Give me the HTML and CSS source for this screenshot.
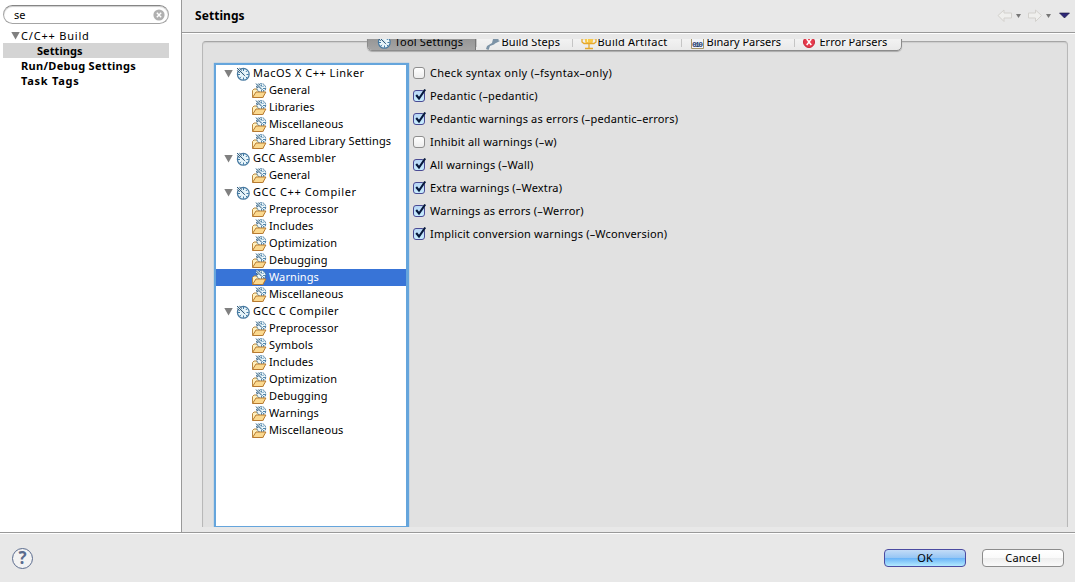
FILE: index.html
```
<!DOCTYPE html>
<html lang="en">
<head>
<meta charset="utf-8">
<title>Settings</title>
<link rel="stylesheet" href="styles.css">
</head>
<body>
<svg class="defs" aria-hidden="true">
  <symbol id="dial" viewBox="0 0 14 14">
    <circle cx="7.300" cy="7.300" r="5.900" fill="#eaf6fb" stroke="#4779a0" stroke-width="1.200"/>
    <path d="M7.500 2v2M7.500 10.500v2.200M2 7.500h2M10.500 7.500h2.200M11.300 3.500 9.800 5M3.500 11.300 5 9.800M11.300 11.300 9.800 9.800" stroke="#3f7ba6" stroke-width="1" fill="none"/>
    <path d="M1 1h2.200l5.500 5.200v2.500H7L1.500 3.300Z" fill="#d4e8ef"/>
    <path d="M1 1l7.800 7.800M3.400 1.200l2.500 2.300M1.300 3.400l2.400 2.500" stroke="#31577a" stroke-width="1"/>
  </symbol>
  <symbol id="folder" viewBox="0 0 16 16">
    <path d="M1.500 14V7.500L3 6h3l1 1.500h5.500V14Z" fill="#fff0bd" stroke="#b98740"/>
    <circle cx="10.300" cy="5" r="4.400" fill="#eff8fb" stroke="#3f749b" stroke-dasharray="2 .7"/>
    <path d="M10.500 1.500v2M14 5.500h-2M13 2.500l-1.500 1.500M13 8l-1.500-1.500M10.500 7v2" stroke="#4d86ad"/>
    <path d="M5 .5h2l4 4v2H9.500L5 2.500Z" fill="#d9edf5"/>
    <path d="m5 .6 6 6M7.500 .8l2 1.800M5.300 3l2 2" stroke="#31577a"/>
    <path d="M1.500 14.500 5 9h9.900L11.800 14.500Z" fill="#fbd98f" stroke="#b87a30"/>
  </symbol>
  <symbol id="check" viewBox="0 0 14 15"><path d="m3.200 7 2.800 3.500L12.200 1.500" fill="none" stroke="#06183b" stroke-width="2.100"/></symbol>
</svg>
<div class="window">
  <div class="top">
    <aside class="sidebar">
      <div class="search"><span>se</span>
        <svg width="12" height="12" viewBox="0 0 12 12"><circle cx="6" cy="6" r="5.600" fill="#b0b0b0"/><path d="m3.800 3.800 4.400 4.400m0-4.400L3.800 8.200" stroke="#fff" stroke-width="1.400"/></svg>
      </div>
      <div class="nav"><i class="arrow"></i><span class="t-build">C/C++ Build</span></div>
      <div class="nav child selected">Settings</div>
      <div class="nav bold">Run/Debug Settings</div>
      <div class="nav bold t-tags">Task Tags</div>
    </aside>
    <main class="main">
      <header class="header"><h1>Settings</h1>
        <svg class="history" width="76" height="16" viewBox="0 0 76 16">
          <path d="M1 7.500 7 2v3h7.500v5H7v3.500Z" fill="#efefed" stroke="#d3d1cd"/>
          <path d="M44.500 7.500 38.500 2v3H31.500v5h7v3.500Z" fill="#efefed" stroke="#d3d1cd"/>
          <path d="M19 6h5L21.500 10ZM49 6h5L51.500 10Z" fill="#777"/>
          <path d="M62.500 5h10L67.500 10Z" fill="#2e2878" stroke="#15133b" stroke-width=".6"/>
        </svg>
      </header>
      <section class="viewport">
        <div class="tabs">
          <div class="tab tab-tool active"><svg width="14" height="14"><use href="#dial"/></svg><span>Tool Settings</span></div>
          <div class="tab tab-steps"><svg width="16" height="15" viewBox="0 0 16 15"><path d="M1 14 2 11l5-3 1-4 3-2h3l1 1-2 2 2 1-3 1.500-2 1-1 1-4 1.500L3.500 15Z" fill="#7c93a6"/></svg><span>Build Steps</span></div>
          <div class="tab tab-artifact"><svg width="16" height="15" viewBox="0 0 16 15"><path d="M4 1h8v5c0 2-1.500 3-4 3S4 8 4 6Z" fill="#f8c94b"/><path d="M4 3.500H1V7l2 1.500h10L15 7V3.500h-3M8 9v4M4 13.500h8" fill="none" stroke="#e5a82c" stroke-width="1.300"/><path d="M6.500 2v5" stroke="#fff1b3"/></svg><span>Build Artifact</span></div>
          <div class="tab tab-binary"><svg width="13" height="14" viewBox="0 0 13 14"><path d="M.5 0v13.500h12V0" fill="#f1f4f8" stroke="#a69569"/><path d="M2 3.500h9" stroke="#8da5c8"/><text x="1" y="12.300" class="bits" textLength="11">010</text></svg><span>Binary Parsers</span></div>
          <div class="tab tab-error"><svg width="12" height="12" viewBox="0 0 12 12"><circle cx="6" cy="6" r="5.500" fill="#e63b4d" stroke="#c82739"/><path d="m3.700 3 4.600 6m0-6L3.700 9" stroke="#fff" stroke-width="1.500"/></svg><span>Error Parsers</span></div>
        </div>
        <div class="group">
          <div class="tree">
            <div class="row parent"><i class="arrow"></i><svg><use href="#dial"/></svg><span>MacOS X C++ Linker</span></div>
            <div class="row"><svg><use href="#folder"/></svg><span>General</span></div>
            <div class="row"><svg><use href="#folder"/></svg><span>Libraries</span></div>
            <div class="row"><svg><use href="#folder"/></svg><span>Miscellaneous</span></div>
            <div class="row"><svg><use href="#folder"/></svg><span>Shared Library Settings</span></div>
            <div class="row parent"><i class="arrow"></i><svg><use href="#dial"/></svg><span class="wide">GCC Assembler</span></div>
            <div class="row"><svg><use href="#folder"/></svg><span>General</span></div>
            <div class="row parent"><i class="arrow"></i><svg><use href="#dial"/></svg><span class="wider">GCC C++ Compiler</span></div>
            <div class="row"><svg><use href="#folder"/></svg><span>Preprocessor</span></div>
            <div class="row"><svg><use href="#folder"/></svg><span>Includes</span></div>
            <div class="row"><svg><use href="#folder"/></svg><span>Optimization</span></div>
            <div class="row"><svg><use href="#folder"/></svg><span>Debugging</span></div>
            <div class="row chosen"><svg><use href="#folder"/></svg><span>Warnings</span></div>
            <div class="row"><svg><use href="#folder"/></svg><span>Miscellaneous</span></div>
            <div class="row parent"><i class="arrow"></i><svg><use href="#dial"/></svg><span class="wide">GCC C Compiler</span></div>
            <div class="row"><svg><use href="#folder"/></svg><span>Preprocessor</span></div>
            <div class="row"><svg><use href="#folder"/></svg><span>Symbols</span></div>
            <div class="row"><svg><use href="#folder"/></svg><span>Includes</span></div>
            <div class="row"><svg><use href="#folder"/></svg><span>Optimization</span></div>
            <div class="row"><svg><use href="#folder"/></svg><span>Debugging</span></div>
            <div class="row"><svg><use href="#folder"/></svg><span>Warnings</span></div>
            <div class="row"><svg><use href="#folder"/></svg><span>Miscellaneous</span></div>
          </div>
          <div class="options">
            <div class="option syntax"><b class="box"></b><span>Check syntax only (–fsyntax–only)</span></div>
            <div class="option"><b class="box on"><svg><use href="#check"/></svg></b><span>Pedantic (–pedantic)</span></div>
            <div class="option"><b class="box on"><svg><use href="#check"/></svg></b><span>Pedantic warnings as errors (–pedantic–errors)</span></div>
            <div class="option"><b class="box"></b><span>Inhibit all warnings (–w)</span></div>
            <div class="option"><b class="box on"><svg><use href="#check"/></svg></b><span>All warnings (–Wall)</span></div>
            <div class="option"><b class="box on"><svg><use href="#check"/></svg></b><span>Extra warnings (–Wextra)</span></div>
            <div class="option"><b class="box on"><svg><use href="#check"/></svg></b><span>Warnings as errors (–Werror)</span></div>
            <div class="option"><b class="box on"><svg><use href="#check"/></svg></b><span>Implicit conversion warnings (–Wconversion)</span></div>
          </div>
        </div>
      </section>
    </main>
  </div>
  <footer class="footer">
    <div class="help">?</div>
    <div class="button primary">OK</div>
    <div class="button cancel">Cancel</div>
  </footer>
</div>
</body>
</html>
```
FILE: styles.css
```
* { box-sizing: border-box; }
body { margin: 0; font: 11px/15px "Noto Sans", sans-serif; color: #000; background: #e8e8e8; overflow: hidden; }
.defs { position: absolute; width: 0; height: 0; }
.window { width: 1075px; height: 582px; display: flex; flex-direction: column; }
.top { height: 532px; display: flex; }
.sidebar { width: 182px; background: #fff; border-right: 1px solid #999; padding: 5px 12px 0 3px; }
.search { width: 166px; height: 19px; border: 1px solid #a4a4a4; border-top-color: #858585; border-radius: 10px; box-shadow: inset 0 1px 1px #ccc; display: flex; align-items: center; justify-content: space-between; padding: 0 3px 0 10px; margin-bottom: 4px; }
.nav { width: 166px; height: 15px; padding-left: 18px; display: flex; align-items: center; white-space: nowrap; }
.nav .arrow { margin-left: -10px; margin-right: 1px; }
.nav.child { padding-left: 34px; }
.nav.selected { background: #d4d4d4; font-weight: 700; letter-spacing: .05px; }
.nav.bold { font-weight: 700; letter-spacing: .3px; }
.nav.t-tags { letter-spacing: .75px; }
.t-build { letter-spacing: .8px; }
.arrow { width: 9px; height: 8px; background: #808080; clip-path: polygon(0 0, 100% 0, 50% 100%); flex: none; }
.main { flex: 1; min-width: 0; }
.header { height: 33px; border-bottom: 1px solid #999; box-shadow: 0 1px #fff; display: flex; align-items: center; justify-content: space-between; padding: 0 2px 0 13px; }
.header h1 { font-size: 12px; line-height: 16px; margin: 0; letter-spacing: .05px; }
.viewport { margin: 6px 7px 0 20px; height: 488px; overflow: hidden; display: flex; flex-direction: column; align-items: center; }
.tabs { width: 535px; height: 22px; flex: none; margin: -10px 0 -10px -2px; border: 1px solid #8b8b8b; border-radius: 5px; display: flex; background: linear-gradient(#fafafa, #e9e9e9); z-index: 1; overflow: hidden; box-shadow: 0 1px 1px #aaa; }
.tab { display: flex; align-items: center; height: 100%; padding-left: 9px; gap: 3px; padding-top: 4px; position: relative; white-space: nowrap; }
.tab svg { flex: none; }
.tab span { padding-bottom: 2px; }
.tab + .tab::before { content: ""; position: absolute; left: 0; top: 8px; height: 9px; width: 1px; background: #c5c5c5; }
.tab.active { background: linear-gradient(#8b8b8b, #a5a5a5); border-right: 1px solid #777; }
.tab-tool { width: 108px; letter-spacing: .2px; }
.tab-tool span { margin-left: 1px; }
.tab-steps { width: 96px; gap: 1px; letter-spacing: .1px; }
.tab-artifact { width: 109px; gap: 1px; letter-spacing: .22px; }
.tab-binary { width: 113px; padding-left: 10px; }
.tab-error { width: 106px; gap: 5px; }
.bits { font: 700 8px "Liberation Mono", monospace; fill: #263d70; }
.group { width: 866px; height: 500px; flex: none; border: 1px solid #b8b8b8; border-top-color: #a5a5a5; border-radius: 4px; background: #e1e1e1; box-shadow: inset 0 1px 1px #cecece; display: flex; padding: 21px 0 0 11px; }
.tree { width: 195px; height: 465px; border: 2px solid #65a5dc; border-right-width: 3px; background: #fff; box-shadow: 0 0 1px #65a5dc; }
.row { height: 17px; display: flex; align-items: center; padding-left: 35px; white-space: nowrap; letter-spacing: .1px; }
.row span { padding-bottom: 2px; }
.row svg { width: 16px; height: 16px; margin-right: 2px; flex: none; }
.row.parent { padding-left: 8px; letter-spacing: .5px; }
.row.parent .wide { letter-spacing: .32px; }
.row.parent .wider { letter-spacing: .6px; }
.row.parent .arrow { margin-right: 3px; }
.row.parent svg { width: 14px; height: 14px; margin-right: 3px; }
.chosen { background: #3874d7; color: #fff; }
.options { padding: 0 0 0 4px; margin-top: -2px; }
.option { height: 23px; display: flex; align-items: center; gap: 5px; letter-spacing: .16px; white-space: nowrap; }
.option.syntax { letter-spacing: .3px; }
.box { width: 12px; height: 12px; border: 1px solid #8e8e8e; border-radius: 3px; background: linear-gradient(#fff, #ededed); position: relative; }
.box.on { border-color: #4a4b94; background: linear-gradient(#b8d6f5, #c7edff); }
.box svg { position: absolute; left: -1px; top: -3px; width: 14px; height: 15px; }
.footer { height: 50px; border-top: 1px solid #999; box-shadow: inset 0 1px #fff; display: flex; align-items: center; padding: 1px 11px 0 12px; gap: 16px; }
.help { width: 21px; height: 21px; border: 1.5px solid #5b6c8e; border-radius: 50%; background: #f3f3f3; color: #5b6c8e; font: 700 17px/18px "Open Sans", sans-serif; text-align: center; margin-right: auto; }
.button { width: 82px; height: 18px; border: 1px solid #8c8c8c; border-radius: 4px; background: linear-gradient(#fff 0, #fafafa 48%, #ededed 50%, #fafafa); line-height: 16px; text-align: center; }
.cancel { letter-spacing: .2px; }
.primary { border-color: #4b4ba1; background: linear-gradient(#c3dcf7 0, #97c6f4 48%, #68b2f7 50%, #b3eaff); }
```
